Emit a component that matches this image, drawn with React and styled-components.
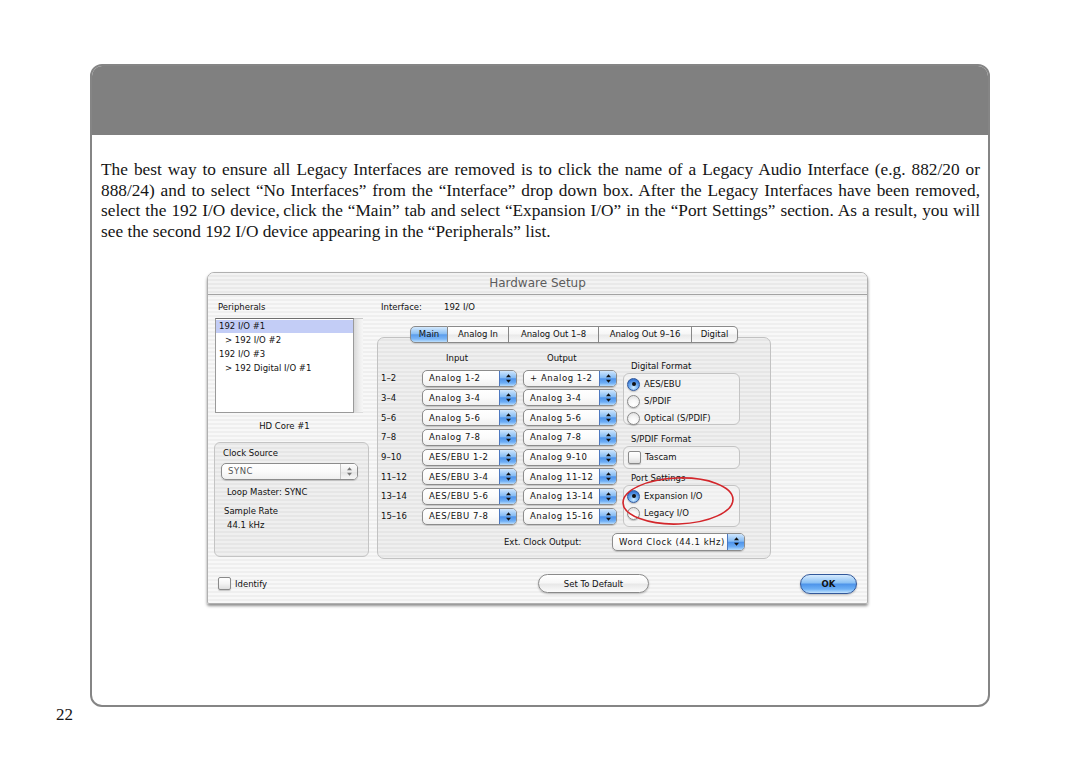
import React from 'react';
import styled, { createGlobalStyle, css } from 'styled-components';

const GlobalStyle = createGlobalStyle`
  html, body { margin: 0; padding: 0; background: #fff; }
  body { font-family: "Liberation Serif", "Times New Roman", serif; }
`;

const Page = styled.div`
  width: 1080px;
  height: 772px;
  padding-top: 64px;
  box-sizing: border-box;
  overflow: hidden;
`;

const Frame = styled.section`
  margin-left: 90px;
  width: 900px;
  height: 643px;
  box-sizing: border-box;
  border: 2px solid #858585;
  border-radius: 12px;
  overflow: hidden;
  background: #fff;
`;

const Banner = styled.div`
  height: 69px;
  background: #808080;
`;

const Prose = styled.div`
  margin-top: 25px;
  padding: 0 8px 0 9px;
  font-size: 17.3px;
  line-height: 20.7px;
  color: #151515;
`;

const ProseLine = styled.div`
  text-align: justify;
  text-align-last: ${(p) => (p.$last ? 'left' : 'justify')};
`;

const PageNumber = styled.div`
  margin: 0 0 0 56px;
  font-size: 17px;
  line-height: 16px;
  color: #151515;
`;

/* ---------- dialog ---------- */

const Dialog = styled.div`
  margin: 29px 0 0 115px;
  width: 661px;
  box-sizing: border-box;
  border: 1px solid #b0b0b0;
  border-radius: 7px 7px 2px 2px;
  overflow: hidden;
  box-shadow: 0 2px 3px rgba(0, 0, 0, 0.45);
  font-family: "DejaVu Sans", Verdana, sans-serif;
  font-size: 8.5px;
  color: #111;
  background: repeating-linear-gradient(180deg, #f8f8f8 0 2px, #efefef 2px 4px);
`;

const TitleBar = styled.div`
  height: 21px;
  line-height: 21px;
  text-align: center;
  font-size: 12px;
  color: #5c5c5c;
  border-bottom: 1px solid #a3a3a3;
  background: repeating-linear-gradient(180deg, #f3f3f3 0 2px, #e9e9e9 2px 4px);
`;

const Body = styled.div`
  padding: 6px 10px 9px 7px;
  display: grid;
  grid-template-columns: 154px 394px 1fr;
  column-gap: 8px;
  row-gap: 15px;
`;

const Column = styled.div`
  display: flex;
  flex-direction: column;
  align-items: flex-start;
`;

const Label = styled.div`
  height: 12px;
  line-height: 12px;
  white-space: nowrap;
  margin-top: ${(p) => p.$mt || 0}px;
  margin-left: ${(p) => p.$ml || 0}px;
`;

const ListWrap = styled.div`
  margin-top: 5px;
  display: flex;
  height: 95px;
`;

const ListBox = styled.div`
  width: 139px;
  box-sizing: border-box;
  background: #fff;
  border: 1px solid #9a9a9a;
  border-top-color: #6f6f6f;
  padding-top: 1px;
`;

const ScrollTrack = styled.div`
  width: 9px;
  background: linear-gradient(90deg, #d9d9d9, #eeeeee 60%, #f6f6f6);
  border-top: 1px solid #c9c9c9;
  border-bottom: 1px solid #dcdcdc;
`;

const ListRow = styled.div`
  height: 13px;
  line-height: 13px;
  margin-bottom: 1px;
  padding-left: ${(p) => (p.$child ? 9 : 3)}px;
  background: ${(p) => (p.$selected ? '#c3cdf6' : 'transparent')};
  white-space: nowrap;
`;

const CenterLabel = styled.div`
  width: 139px;
  margin-top: 7px;
  height: 12px;
  line-height: 12px;
  text-align: center;
`;

const GroupBox = styled.div`
  box-sizing: border-box;
  width: ${(p) => p.$w}px;
  height: ${(p) => p.$h}px;
  margin-top: ${(p) => p.$mt || 0}px;
  margin-left: -1px;
  border: 1px solid #c4c4c4;
  border-radius: 6px;
  background: rgba(0, 0, 0, 0.035);
  padding: ${(p) => p.$pad || '0'};
  display: flex;
  flex-direction: column;
  align-items: flex-start;
`;

/* popups */
const PopupBox = styled.div`
  width: ${(p) => p.$w}px;
  height: ${(p) => p.$h || 17}px;
  margin-top: ${(p) => p.$mt || 0}px;
  box-sizing: border-box;
  border: 1px solid #8c8c8c;
  border-radius: 5px;
  background: linear-gradient(180deg, #ffffff 0%, #fbfbfb 50%, #f0f0f0 100%);
  box-shadow: 0 1px 1px rgba(0, 0, 0, 0.18);
  display: flex;
  align-items: center;
  overflow: hidden;
  color: ${(p) => (p.$dim ? '#555' : '#111')};
`;

const PopupText = styled.span`
  flex: 1;
  padding-left: 6px;
  letter-spacing: 0.55px;
  white-space: nowrap;
  overflow: hidden;
`;

const PopupArrows = styled.span`
  align-self: stretch;
  width: 16px;
  display: flex;
  align-items: center;
  justify-content: center;
  border-left: 1px solid ${(p) => (p.$dim ? '#c4c4c4' : '#4d78c0')};
  background: ${(p) =>
    p.$dim
      ? 'linear-gradient(180deg, #fdfdfd, #ededed 50%, #e2e2e2 51%, #f7f7f7)'
      : 'linear-gradient(180deg, #cfe6fd 0%, #86bcf4 45%, #4f94ea 52%, #6eaef5 80%, #b8dcfc 100%)'};
`;

function Popup({ w, h, mt, dim, children }) {
  return (
    <PopupBox $w={w} $h={h} $mt={mt} $dim={dim}>
      <PopupText>{children}</PopupText>
      <PopupArrows $dim={dim}>
        <svg width="7" height="11" viewBox="0 0 7 11">
          <path d="M3.5 1.2 L6 4.2 H1 Z M3.5 9.8 L6 6.8 H1 Z" fill={dim ? '#777' : '#101010'} />
        </svg>
      </PopupArrows>
    </PopupBox>
  );
}

/* right column */
const InterfaceRow = styled.div`
  display: flex;
  height: 12px;
  line-height: 12px;
  padding-left: 4px;
`;

const InterfaceKey = styled.span`
  width: 63px;
`;

const Tabs = styled.div`
  display: flex;
  margin: 13px 0 -6px 33px;
  position: relative;
  z-index: 1;
`;

const Tab = styled.div`
  width: ${(p) => p.$w}px;
  height: 17px;
  box-sizing: border-box;
  display: flex;
  align-items: center;
  justify-content: center;
  border: 1px solid #8a8a8a;
  border-left: none;
  white-space: nowrap;
  box-shadow: 0 1px 1px rgba(0, 0, 0, 0.12);
  background: ${(p) =>
    p.$active
      ? 'linear-gradient(180deg, #d4e9fd 0%, #8cc0f4 45%, #5b9dec 52%, #7bb6f6 80%, #bfe0fc 100%)'
      : 'linear-gradient(180deg, #ffffff 0%, #f6f6f6 48%, #e9e9e9 52%, #f8f8f8 100%)'};
  &:first-child {
    border-left: 1px solid #8a8a8a;
    border-radius: 5px 0 0 5px;
  }
  &:last-child {
    border-radius: 0 5px 5px 0;
  }
`;

const TabPanel = styled.div`
  width: 394px;
  height: 222px;
  box-sizing: border-box;
  border: 1px solid #c2c2c2;
  border-radius: 7px;
  background: rgba(0, 0, 0, 0.035);
  padding: 14px 0 7px 3px;
`;

const PanelRow = styled.div`
  display: flex;
  align-items: flex-start;
`;

const RouteGrid = styled.div`
  display: grid;
  grid-template-columns: 35px 95px 94px;
  grid-template-rows: 15.3px repeat(8, 17px);
  column-gap: 6px;
  row-gap: 2.7px;
  align-items: center;
`;

const ColHead = styled.div`
  align-self: start;
  height: 12px;
  line-height: 12px;
  padding-left: 24px;
`;

const RowLabel = styled.div`
  line-height: 12px;
  white-space: nowrap;
`;

const SideCol = styled.div`
  width: 117px;
  margin: 8px 0 0 6px;
  display: flex;
  flex-direction: column;
`;

const SideLabel = styled.div`
  height: 12px;
  line-height: 12px;
  padding-left: 8px;
  margin-top: ${(p) => p.$mt || 0}px;
  margin-bottom: 1px;
  white-space: nowrap;
`;

const OptionBox = styled.div`
  height: ${(p) => p.$h}px;
  box-sizing: border-box;
  border: 1px solid #c4c4c4;
  border-radius: 6px;
  background: rgba(255, 255, 255, 0.35);
  padding: ${(p) => p.$pad};
  display: flex;
  flex-direction: column;
  gap: 4px;
`;

const Option = styled.div`
  display: flex;
  align-items: center;
  height: 13px;
  gap: 4px;
  padding-left: ${(p) => p.$pl || 3}px;
  white-space: nowrap;
`;

const Radio = styled.span`
  position: relative;
  flex: none;
  width: 13px;
  height: 13px;
  box-sizing: border-box;
  border-radius: 50%;
  border: 1px solid ${(p) => (p.$on ? '#2f579a' : '#8a8a8a')};
  background: ${(p) =>
    p.$on
      ? 'radial-gradient(circle at 50% 78%, #d2ecff 0%, #79b4f3 38%, #3a7ad6 75%, #2d5fb8 100%)'
      : 'radial-gradient(circle at 50% 75%, #ffffff 0%, #f6f6f6 45%, #d8d8d8 100%)'};
  box-shadow: 0 1px 1px rgba(0, 0, 0, 0.2);
  ${(p) =>
    p.$on &&
    css`
      &::after {
        content: '';
        position: absolute;
        left: 50%;
        top: 50%;
        width: 4px;
        height: 4px;
        margin: -2px 0 0 -2px;
        border-radius: 50%;
        background: #111;
      }
    `}
`;

const Check = styled.span`
  flex: none;
  width: 13px;
  height: 13px;
  box-sizing: border-box;
  border: 1px solid #8a8a8a;
  border-radius: 2px;
  background: linear-gradient(180deg, #ffffff 0%, #f4f4f4 50%, #dedede 100%);
  box-shadow: 0 1px 1px rgba(0, 0, 0, 0.2);
`;

const PortGroup = styled.div`
  position: relative;
  display: flex;
  flex-direction: column;
`;

const Annotation = styled.svg`
  position: absolute;
  left: -4px;
  top: 6px;
  pointer-events: none;
`;

const ExtRow = styled.div`
  display: flex;
  align-items: center;
  margin-top: 6px;
  padding-left: 123px;
`;

const ExtLabel = styled.span`
  width: 108px;
  white-space: nowrap;
`;

/* bottom bar */
const BottomBar = styled.div`
  grid-column: 1 / -1;
  display: grid;
  grid-template-columns: 323px 111px 1fr;
  align-items: center;
  height: 20px;
`;

const IdentifyRow = styled.div`
  display: flex;
  align-items: center;
  gap: 4px;
  padding-left: 3px;
`;

const Button = styled.div`
  height: ${(p) => p.$h || 19}px;
  width: ${(p) => p.$w}px;
  box-sizing: border-box;
  border-radius: 10px;
  display: flex;
  align-items: center;
  justify-content: center;
  white-space: nowrap;
  justify-self: ${(p) => p.$align || 'start'};
  border: 1px solid ${(p) => (p.$primary ? '#32589a' : '#8a8a8a')};
  box-shadow: 0 1px 2px rgba(0, 0, 0, 0.25);
  background: ${(p) =>
    p.$primary
      ? 'linear-gradient(180deg, #d6ebfe 0%, #8dc2f5 42%, #4f95ea 52%, #6db0f6 78%, #c4e4fd 100%)'
      : 'linear-gradient(180deg, #ffffff 0%, #f7f7f7 45%, #e8e8e8 55%, #fbfbfb 100%)'};
  font-weight: ${(p) => (p.$primary ? 600 : 400)};
`;

const inputs = [
  'Analog 1-2',
  'Analog 3-4',
  'Analog 5-6',
  'Analog 7-8',
  'AES/EBU 1-2',
  'AES/EBU 3-4',
  'AES/EBU 5-6',
  'AES/EBU 7-8',
];
const outputs = [
  '+ Analog 1-2',
  'Analog 3-4',
  'Analog 5-6',
  'Analog 7-8',
  'Analog 9-10',
  'Analog 11-12',
  'Analog 13-14',
  'Analog 15-16',
];
const channels = ['1–2', '3–4', '5–6', '7–8', '9–10', '11–12', '13–14', '15–16'];

const tabs = [
  { label: 'Main', w: 38, active: true },
  { label: 'Analog In', w: 61 },
  { label: 'Analog Out 1–8', w: 90 },
  { label: 'Analog Out 9–16', w: 93 },
  { label: 'Digital', w: 46 },
];

function HardwareSetup() {
  return (
    <Dialog>
      <TitleBar>Hardware Setup</TitleBar>
      <Body>
        <Column>
          <Label $ml={3}>Peripherals</Label>
          <ListWrap>
            <ListBox>
              <ListRow $selected>192 I/O #1</ListRow>
              <ListRow $child>&gt; 192 I/O #2</ListRow>
              <ListRow>192 I/O #3</ListRow>
              <ListRow $child>&gt; 192 Digital I/O #1</ListRow>
            </ListBox>
            <ScrollTrack />
          </ListWrap>
          <CenterLabel>HD Core #1</CenterLabel>
          <GroupBox $w={155} $h={115} $mt={10} $pad="4px 0 0 6px">
            <Label $ml={2}>Clock Source</Label>
            <Popup w={137} mt={4} dim>
              SYNC
            </Popup>
            <Label $mt={6} $ml={6}>Loop Master: SYNC</Label>
            <Label $mt={7} $ml={3}>Sample Rate</Label>
            <Label $mt={2} $ml={6}>44.1 kHz</Label>
          </GroupBox>
        </Column>

        <Column>
          <InterfaceRow>
            <InterfaceKey>Interface:</InterfaceKey>
            <span>192 I/O</span>
          </InterfaceRow>
          <Tabs>
            {tabs.map((t) => (
              <Tab key={t.label} $w={t.w} $active={t.active}>
                {t.label}
              </Tab>
            ))}
          </Tabs>
          <TabPanel>
            <PanelRow>
              <RouteGrid>
                <span />
                <ColHead>Input</ColHead>
                <ColHead>Output</ColHead>
                {channels.map((c, i) => (
                  <React.Fragment key={c}>
                    <RowLabel>{c}</RowLabel>
                    <Popup w={95}>{inputs[i]}</Popup>
                    <Popup w={94}>{outputs[i]}</Popup>
                  </React.Fragment>
                ))}
              </RouteGrid>
              <SideCol>
                <SideLabel>Digital Format</SideLabel>
                <OptionBox $h={52} $pad="4px 0 0 0">
                  <Option>
                    <Radio $on />
                    AES/EBU
                  </Option>
                  <Option>
                    <Radio />
                    S/PDIF
                  </Option>
                  <Option>
                    <Radio />
                    Optical (S/PDIF)
                  </Option>
                </OptionBox>
                <SideLabel $mt={8}>S/PDIF Format</SideLabel>
                <OptionBox $h={23} $pad="4px 0 0 0">
                  <Option $pl={4}>
                    <Check />
                    Tascam
                  </Option>
                </OptionBox>
                <PortGroup>
                  <SideLabel $mt={3}>Port Settings</SideLabel>
                  <OptionBox $h={42} $pad="4px 0 0 0">
                    <Option>
                      <Radio $on />
                      Expansion I/O
                    </Option>
                    <Option>
                      <Radio />
                      Legacy I/O
                    </Option>
                  </OptionBox>
                  <Annotation width="118" height="54" viewBox="0 0 118 54">
                    <ellipse
                      cx="59"
                      cy="26"
                      rx="55"
                      ry="23"
                      fill="none"
                      stroke="#d3262b"
                      strokeWidth="1.6"
                      transform="rotate(-2 59 26)"
                    />
                  </Annotation>
                </PortGroup>
              </SideCol>
            </PanelRow>
            <ExtRow>
              <ExtLabel>Ext. Clock Output:</ExtLabel>
              <Popup w={133} h={18}>
                Word Clock (44.1 kHz)
              </Popup>
            </ExtRow>
          </TabPanel>
        </Column>

        <BottomBar>
          <IdentifyRow>
            <Check />
            Identify
          </IdentifyRow>
          <Button $w={111}>Set To Default</Button>
          <Button $w={57} $h={20} $primary $align="end">
            OK
          </Button>
        </BottomBar>
      </Body>
    </Dialog>
  );
}

export default function App() {
  return (
    <>
      <GlobalStyle />
      <Page>
        <Frame>
          <Banner />
          <Prose>
            <ProseLine>
              The best way to ensure all Legacy Interfaces are removed is to click the name of a Legacy Audio
              Interface (e.g. 882/20 or
            </ProseLine>
            <ProseLine>
              888/24) and to select “No Interfaces” from the “Interface” drop down box. After the Legacy
              Interfaces have been removed,
            </ProseLine>
            <ProseLine>
              select the 192 I/O device,{'\u2009'}click the “Main” tab and select “Expansion I/O” in the “Port
              Settings” section. As a result, you will
            </ProseLine>
            <ProseLine $last>
              see the second 192 I/O device appearing in the “Peripherals” list.
            </ProseLine>
          </Prose>
          <HardwareSetup />
        </Frame>
        <PageNumber>22</PageNumber>
      </Page>
    </>
  );
}
